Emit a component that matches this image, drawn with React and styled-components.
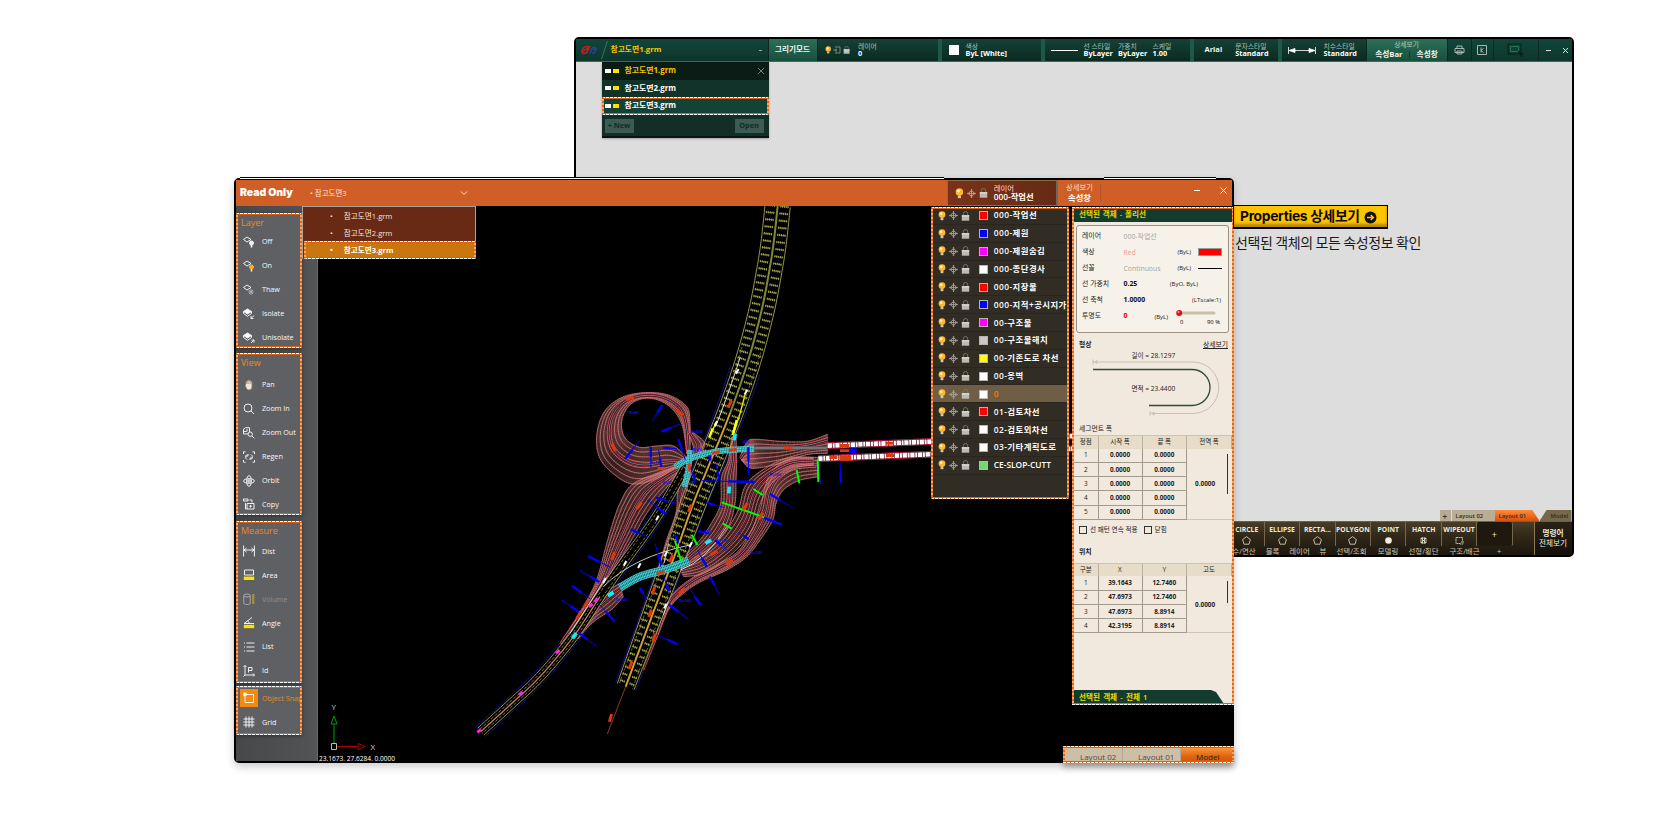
import React from 'react';
import styled, { createGlobalStyle, css } from 'styled-components';

const Global = createGlobalStyle`
  * { box-sizing: border-box; }
  body { margin: 0; background: #fff; }
  #root { width: 1671px; height: 840px; overflow: hidden; }
`;

const ui = '"Open Sans", "Noto Sans CJK KR", sans-serif';

const Desktop = styled.main`
  position: relative;
  width: 1671px;
  height: 840px;
  background: #fff;
  overflow: hidden;
  font-family: ${ui};
  font-size: 8px;
  line-height: 1;
  white-space: nowrap;
`;

const Window = styled.section`
  position: absolute;
  left: ${p => p.$x}px;
  top: ${p => p.$y}px;
  width: ${p => p.$w}px;
  height: ${p => p.$h}px;
  border: 2px solid #000;
  border-radius: 5px;
  background: ${p => p.$bg};
  display: flex;
  flex-direction: column;
  box-shadow: ${p => p.$shadow || 'none'};
`;

const marching = css`
  &::after {
    content: '';
    position: absolute;
    inset: 0;
    pointer-events: none;
    border-radius: 2px;
    background:
      repeating-linear-gradient(90deg, #fff 0 3px, #e8640f 3px 4px) 0 0 / 100% 1px no-repeat,
      repeating-linear-gradient(90deg, #fff 0 3px, #e8640f 3px 4px) 0 100% / 100% 1px no-repeat,
      linear-gradient(#d8600f, #d8600f) 0 1px / 100% 1px no-repeat,
      linear-gradient(#d8600f, #d8600f) 0 calc(100% - 1px) / 100% 1px no-repeat,
      repeating-linear-gradient(#e8640f 0 2px, #ffa468 2px 4px) 0 0 / 2px 100% no-repeat,
      repeating-linear-gradient(#e8640f 0 2px, #ffa468 2px 4px) 100% 0 / 2px 100% no-repeat;
  }
`;

/* ---------- green drawing window ---------- */

const GreenBar = styled.header`
  height: 23px;
  flex: none;
  display: flex;
  align-items: stretch;
  color: #eef5f1;
  background: linear-gradient(#11463a, #0e352b);
  border-bottom: 1px solid #2a7558;
  font-weight: 700;
`;
const BarCell = styled.div`
  width: ${p => p.$w}px;
  padding-left: ${p => p.$pad || 0}px;
  flex: none;
  display: flex;
  align-items: center;
  justify-content: ${p => (p.$center ? 'center' : 'flex-start')};
  gap: ${p => p.$gap || 0}px;
  font-size: ${p => p.$size || 7.5}px;
  color: ${p => p.$color || '#eef5f1'};
  background: ${p =>
    p.$light ? 'linear-gradient(#2c7059, #184f3e)' : p.$flat ? 'transparent' : 'linear-gradient(#143f34 10%, #0a2a21)'};
  border-right: ${p => (p.$last ? '0' : p.$edge ? '4px solid #1e5946' : '1px solid #0a2a22')};
`;
const FileName = styled.span` flex: 1; `;
const Dash = styled.i`
  width: 3px;
  height: 1px;
  margin-right: 6px;
  background: #7fb09c;
`;
const Slant = styled.i`
  width: 1px;
  height: 18px;
  margin-right: 6px;
  background: #2f7a60;
  transform: skewX(-18deg);
`;
const Pair = styled.div`
  display: flex;
  flex-direction: column;
  gap: 0;
  width: ${p => (p.$w ? p.$w + 'px' : 'auto')};
  font-size: 7.3px;
  line-height: 7.5px;
  color: #fff;
  small { font-size: 6.8px; font-weight: 400; color: #a9c0b7; }
`;
const Whitebox = styled.i`
  width: 10px;
  height: 10px;
  background: #fff;
`;
const Rule = styled.i`
  width: 27px;
  height: 1px;
  background: #fff;
`;
const DetailPair = styled.div`
  display: flex;
  flex-direction: column;
  align-items: center;
  gap: 2px;
  small { font-size: 6.7px; font-weight: 400; color: #a9d0c0; }
  div { display: flex; gap: 6.5px; font-size: 7.7px; }
  i { width: 1px; background: #0e3a2e; }
`;

const GreenMenu = styled.div`
  position: absolute;
  left: 26px;
  top: 23px;
  width: 167px;
  height: 76px;
  background: #132e27;
  border-bottom: 2px solid #071510;
  box-shadow: 0 1px 2px #0004;
`;
const GreenItem = styled.div`
  position: relative;
  height: 17.6px;
  display: flex;
  align-items: center;
  padding: 0 5px 0 3px;
  font-size: 7.9px;
  font-weight: 700;
  color: ${p => (p.$current ? '#f6c400' : '#fff')};
  background: ${p => (p.$current ? '#0b1b16' : p.$picked ? '#154236' : '#12332a')};
  ${p => p.$picked && marching}
  span { flex: 1; padding-top: .6px; }
`;
const Chips = styled.i`
  width: 14px;
  height: 4px;
  margin-right: 6px;
  background: linear-gradient(90deg, #fff 0 6.5px, transparent 6.5px 8px, #ffe100 8px);
`;
const MenuFooter = styled.div`
  display: flex;
  justify-content: space-between;
  padding: 4px 5px 0 3px;
`;
const GhostButton = styled.div`
  width: 29px;
  height: 14px;
  display: grid;
  place-items: center;
  font-size: 7.3px;
  font-weight: 700;
  color: #122c25;
  background: #3c5b52;
`;

const GreenSpacer = styled.div` flex: 1; `;
const LayoutTabs = styled.div`
  height: 11px;
  display: flex;
  justify-content: flex-end;
`;
const LayoutTab = styled.div`
  width: ${p => p.$w}px;
  display: flex;
  align-items: center;
  padding: 2px 0 0 ${p => p.$pad}px;
  font-size: ${p => p.$size || 5.9}px;
  font-weight: 600;
  color: #352d20;
  margin-right: ${p => p.$gap || 0}px;
  background: ${p => p.$bg};
  clip-path: ${p => p.$clip || 'none'};
`;
const CommandBar = styled.footer`
  height: 34px;
  flex: none;
  display: flex;
  justify-content: flex-end;
  color: #eee9dc;
  background: linear-gradient(#4a3d26, #32291a 40%, #1c160e);
  border-top: 1px solid #6f6244;
  border-radius: 0 0 3px 3px;
`;
const CommandGroup = styled.div`
  width: 304px;
  display: flex;
  flex-direction: column;
`;
const CommandRow = styled.div`
  display: flex;
  height: 25.5px;
  flex: none;
`;
const Command = styled.div`
  width: 35.4px;
  height: 24px;
  flex: none;
  display: flex;
  flex-direction: column;
  align-items: center;
  gap: 2.5px;
  padding-top: 4.6px;
  font-size: 6.8px;
  font-weight: 700;
  border-right: 1px solid #75684a;
`;
const AddCommand = styled.div`
  width: 35.4px;
  height: 24px;
  display: grid;
  place-items: center;
  font-size: 9px;
  background: #1e190f;
  border-right: 1px solid #75684a;
  border-radius: 2px;
`;
const Categories = styled.div`
  display: flex;
  align-items: center;
  height: 9px;
  flex: none;
  font-size: 7.4px;
  color: #cfc7b2;
`;
const Category = styled.div`
  width: ${p => p.$w}px;
  flex: none;
  text-align: center;
`;
const Prompt = styled.div`
  width: 38px;
  display: flex;
  flex-direction: column;
  align-items: center;
  justify-content: center;
  gap: 2.500px;
  padding-top: 1px;
  font-size: 7.6px;
  border-left: 1px solid #8a7a54;
  background: linear-gradient(#2a2216, #14100a);
`;

/* ---------- callout ---------- */

const Callout = styled.aside`
  position: absolute;
  left: 1233px;
  top: 205px;
  color: #0a0a0a;
  font-family: "Noto Sans CJK KR", sans-serif;
`;
const CalloutTag = styled.div`
  width: 155px;
  height: 24px;
  display: flex;
  align-items: center;
  gap: 4px;
  padding: 1px 0 0 6px;
  border: 1px solid #000;
  border-bottom-width: 2px;
  box-shadow: inset 0 -3px 3px #b38500;
  background: #ffc400;
  font-family: Inter, "Noto Sans CJK KR", sans-serif;
  font-size: 13.8px;
  font-weight: 700;
  letter-spacing: -.3px;
`;
const CalloutText = styled.p`
  margin: 6px 0 0 2px;
  font-size: 14px;
  letter-spacing: -.38px;
  color: #1a1a1a;
`;

/* ---------- read only window ---------- */

const OrangeBar = styled.header`
  height: 26px;
  flex: none;
  display: flex;
  align-items: center;
  color: #fff;
  background: #d05f27;
`;
const Brand = styled.b`
  width: 74px;
  padding-left: 4px;
  font-family: Inter, sans-serif;
  font-size: 10.4px;
  font-weight: 900;
`;
const Current = styled.span`
  width: 150px;
  padding-top: 1px;
  font-size: 7.5px;
  color: #ffe3d3;
`;
const Gap = styled.i` flex: ${p => (p.$w ? `0 0 ${p.$w}px` : 1)}; `;
const LayerBox = styled.div`
  width: 111px;
  height: 26px;
  display: flex;
  align-items: center;
  gap: 3px;
  padding-left: 7px;
  background: linear-gradient(90deg, #7a321a, #662a15);
  border: 1px solid #8d6c45;
  border-right: 2px solid #6b6a58;
`;
const TwoLine = styled.div`
  width: ${p => p.$w}px;
  display: flex;
  flex-direction: column;
  gap: ${p => p.$gap || 0}px;
  padding-left: ${p => p.$pad || 0}px;
  border-right: ${p => (p.$line ? '1px solid #b75424' : '0')};
  font-size: 8.3px;
  font-weight: 600;
  small { font-size: 7.3px; font-weight: 400; color: #ffdccb; }
  span { padding-left: ${p => p.$indent || 0}px; }
`;
const TopLine = styled.i`
  position: absolute;
  top: -3px;
  left: ${p => p.$x}px;
  width: ${p => p.$w}px;
  height: 2px;
  background: linear-gradient(#000 50%, #fff 50%);
`;

const Body = styled.div`
  position: relative;
  flex: 1;
  display: flex;
  min-height: 0;
  background: #000;
`;
const Sidebar = styled.nav`
  width: 82px;
  flex: none;
  display: flex;
  flex-direction: column;
  padding-top: 7px;
  background: linear-gradient(90deg, #47484a, #535456);
  border-right: 1px solid #6a6b6e;
`;
const Group = styled.div`
  position: relative;
  width: 66px;
  height: ${p => p.$h}px;
  margin-bottom: ${p => p.$gap}px;
  padding-top: ${p => p.$top || 0}px;
  flex: none;
  background: #5f6063;
  box-shadow: 0 1px 4px #0006;
  ${marching}
`;
const GroupTitle = styled.div`
  height: ${p => p.$h}px;
  padding: 5px 0 0 5px;
  font-size: 9px;
  color: #f08c10;
`;
const Tool = styled.div`
  height: 23.9px;
  display: flex;
  align-items: center;
  gap: 4px;
  padding-left: 4px;
  font-size: 7.2px;
  font-weight: 500;
  overflow: hidden;
  color: ${p => (p.$tone === 'off' ? '#8f9092' : p.$tone === 'on' ? '#e08a30' : '#f8f8f8')};
`;
const IconBox = styled.i`
  width: 18px;
  height: 18px;
  flex: none;
  display: grid;
  place-items: center;
  background: ${p => (p.$on ? '#f5890b' : 'transparent')};
`;

const BrownMenu = styled.div`
  position: absolute;
  left: 66px;
  top: 0;
  width: 174px;
  background: #682a15;
  border: 1px solid #a9a39d;
  border-bottom: 0;
`;
const BrownItem = styled.div`
  position: relative;
  height: 17.2px;
  padding: 2px 0 0 27px;
  display: flex;
  align-items: center;
  gap: 11px;
  font-size: 7.6px;
  color: #f4e4dc;
  ${p => p.$picked && css`
    width: 172px;
    height: 18px;
    margin-left: 1px;
    padding: 0 0 0 26px;
    font-weight: 700;
    color: #fff;
    background: #c8760d;
    ${marching}
  `}
`;

const Canvas = styled.div`
  flex: 1;
  min-width: 0;
  overflow: hidden;
  svg { display: block; }
`;

const LayerPanel = styled.div`
  position: absolute;
  left: 695px;
  top: 1px;
  width: 138px;
  height: 292px;
  overflow: hidden;
  background: #312c24;
  ${marching}
`;
const LayerRow = styled.div`
  height: 17.85px;
  display: flex;
  align-items: center;
  padding: .5px 0 0 7px;
  gap: 3.2px;
  font-size: 8.4px;
  font-weight: 600;
  color: ${p => (p.$active ? '#ff7800' : '#fff')};
  background: ${p => (p.$active ? '#6f5e45' : 'transparent')};
  border-bottom: 1px solid #2a261f;
`;
const LayerName = styled.span`
  letter-spacing: ${p => (p.$wide ? '.45px' : '0')};
`;
const Swatch = styled.i`
  width: 9px;
  height: 9px;
  margin: 0 3px 0 5px;
  border: 1px solid #b9b5ac;
  background: ${p => p.$c};
`;

const Props = styled.aside`
  position: absolute;
  left: 836px;
  top: 1px;
  width: 162px;
  height: 498px;
  padding: 1px 2px;
  display: flex;
  flex-direction: column;
  background: #f1e9dd;
  color: #222;
  font-size: 6.9px;
  ${marching}
`;
const PropsHead = styled.div`
  height: 14px;
  flex: none;
  padding: 3px 0 0 5px;
  background: #143c2e;
  color: #e6d400;
  font-weight: 600;
  font-size: 7.6px;
  word-spacing: .9px;
`;
const Card = styled.div`
  height: 108px;
  flex: none;
  margin: 3px 3px 0 2px;
  padding: 2px 6px 0 5px;
  border: 1px solid #9a9080;
  border-radius: 3px;
  background: #f6f2ea;
`;
const Field = styled.div`
  height: 16.1px;
  display: grid;
  grid-template-columns: 41.5px 1fr auto;
  align-items: center;
  b {
    color: ${p => p.$c || '#111'};
    font-weight: ${p => (p.$dim ? 400 : 700)};
    padding-top: ${p => (p.$dim ? 2 : 0)}px;
  }
`;
const Note = styled.span`
  display: flex;
  align-items: center;
  gap: ${p => p.$gap || 7}px;
  font-size: 6px;
  padding-right: ${p => p.$r || 0}px;
`;
const ColorBar = styled.i`
  width: 24px;
  height: 8px;
  border: 1px solid #9a9a9a;
  background: red;
`;
const LineBar = styled.i`
  width: 24px;
  height: 1px;
  background: #000;
`;
const SectionHead = styled.div`
  height: ${p => p.$h}px;
  flex: none;
  display: flex;
  justify-content: space-between;
  align-items: center;
  padding: ${p => p.$top || 0}px 4px 0 5px;
  font-size: 6.8px;
  font-weight: ${p => (p.$bold ? 700 : 400)};
  u { font-weight: 400; text-underline-offset: 1px; }
`;
const Figure = styled.div`
  height: 74px;
  flex: none;
  svg { display: block; }
`;
const Table = styled.div`
  display: grid;
  grid-template-columns: 24.5px 44px 44.5px 1fr;
  grid-template-rows: 12.5px repeat(${p => p.$rows}, 14.25px);
  flex: none;
  border-top: 1px solid #cdc4b4;
  text-align: center;
`;
const Th = styled.div`
  display: grid;
  place-items: center;
  background: #e6dcc8;
  border-right: 1px solid #b9b0a1;
  font-size: 6.5px;
`;
const Td = styled.div`
  grid-column: ${p => p.$col};
  display: grid;
  place-items: center;
  padding-top: 1px;
  border-right: 1px solid #9f9789;
  border-bottom: 1px solid #a39b8d;
  font-weight: ${p => (p.$bold ? 700 : 400)};
  font-size: 6.4px;
`;
const TdSpan = styled.div`
  grid-column: 4;
  grid-row: 2 / span ${p => p.$rows};
  position: relative;
  display: flex;
  align-items: center;
  padding: 1px 0 0 8px;
  font-weight: 700;
  font-size: 6.4px;
  border-bottom: 1px solid #cfc6b7;
  i {
    position: absolute;
    right: 4px;
    top: 5px;
    width: 1px;
    height: ${p => p.$bar}px;
    background: #333;
  }
`;
const Checks = styled.div`
  height: 21px;
  flex: none;
  display: flex;
  align-items: center;
  padding-left: 5px;
  gap: 3px;
  font-size: 6.6px;
  span { margin-right: 3px; }
`;
const Check = styled.i`
  width: 8px;
  height: 8px;
  border: 1px solid #333;
`;
const PropsFoot = styled.div`
  height: 14px;
  flex: none;
  margin-top: auto;
  width: 150px;
  padding: 4px 0 0 5px;
  background: #143c2e;
  color: #f0de00;
  font-weight: 600;
  font-size: 7.6px;
  word-spacing: 1.2px;
  clip-path: polygon(0 0, 137px 0, 142px 2px, 150px 14px, 0 14px);
`;
const BottomTabs = styled.div`
  position: absolute;
  right: -2px;
  bottom: -2px;
  width: 171px;
  height: 17px;
  display: flex;
  background: #ccbfa6;
  box-shadow: 0 4px 6px #0005;
  ${marching}
`;
const BottomTab = styled.div`
  width: ${p => p.$w}px;
  padding-left: ${p => p.$pad}px;
  padding-top: 7px;
  font-size: 8px;
  color: ${p => (p.$on ? '#222' : '#544c40')};
  background: ${p => (p.$on ? 'linear-gradient(#ffa04a, #e0640e 60%, #d05508)' : 'transparent')};
  border-right: 1px solid #b3a78f;
`;

/* ---------- icons ---------- */

const Bulb = ({ s = 10 }) => (
  <svg width={s * 0.8} height={s} viewBox="0 0 8 10">
    <circle cx="4" cy="3.6" r="3.4" fill="#ffb72b" />
    <circle cx="3.2" cy="2.8" r="1.3" fill="#fff2c0" />
    <path d="M2.6 6.8h2.8v2.4h-2.8z" fill="#cfcac0" />
  </svg>
);
const Freeze = ({ s = 9, c = '#aaa69e' }) => (
  <svg width={s} height={s} viewBox="0 0 9 9" fill="none" stroke={c} strokeWidth=".8">
    <path d="M4.5 .3v8.4M.3 4.5h8.4M3.5 1.3l1-1 1 1M3.5 7.7l1 1 1-1M1.3 3.5l-1 1 1 1M7.7 3.5l1 1-1 1" />
    <circle cx="4.5" cy="4.5" r="2.3" strokeWidth=".8" />
  </svg>
);
const Lock = ({ s = 9 }) => (
  <svg width={s * 0.9} height={s} viewBox="0 0 9 10">
    <path d="M2.3 4.5V2.7a2.2 2.2 0 0 1 4.4 0V4.5" fill="none" stroke="#77736b" />
    <path d="M.8 4.2h7.4v5.5H.8z" fill="#bdbab4" />
    <path d="M.8 4.2h7.4v1.4H.8z" fill="#dedbd5" />
  </svg>
);

const layerBase = <path d="M0.5 3.5 4 1l4 2.5L4 6z" />;
const toolIcons = {
  off: <>{layerBase}<circle cx="8.5" cy="7" r="2" fill="#eee" /><path d="M8.5 9v2.5" strokeWidth="1.6" /></>,
  on: <>{layerBase}<circle cx="8.5" cy="7" r="2" fill="#ffae2a" stroke="#ffae2a" /><path d="M8.5 9v2.5" strokeWidth="1.6" /></>,
  thaw: <>{layerBase}<path d="M8 5v6M5.3 8h5.4M6 6l4 4M10 6l-4 4" stroke="#aab4c0" /></>,
  isolate: <><path d="M.5 3.5 4.5 1l4 2.5-4 2.5z" fill="#fff" /><path d="M.5 3.5v2l4 2.8 4-2.8v-2M11 7.5l-3 3M8 8v2.5h2.5" /></>,
  unisolate: <><path d="M.5 3.5 4.5 1l4 2.5-4 2.5z" fill="#fff" /><path d="M.5 3.5v2l4 2.8 4-2.8v-2M8 11l3-3M8.5 8H11v2.5" /></>,
  pan: <><path d="M3 5V2.5h1V1.5h1.2V1h1.3v.6H8v1h1V8c0 2-1.4 3-3 3S3.5 10 3 8.5L2 6z" fill="#f2e6da" stroke="#8a7d74" /><path d="M4.3 2v3M5.8 1.500v3.500M7.300 2v3" stroke="#8a7d74" strokeWidth=".6" /></>,
  zoomin: <><circle cx="5" cy="5" r="4" /><path d="M8 8l3 3" /></>,
  zoomout: <><path d="M.5 2.2l2-1.500h4v5l-1.500 1.200h-4.500z M4 2v2.5M.5 4.5h3" /><circle cx="7.2" cy="7.2" r="2.2" fill="#5f6063" /><path d="M9 9l2.400 2.400" /></>,
  regen: <><path d="M.5 3V.8h2M9.5 .8h2V3M.5 9v2.2h2M9.5 11.2h2V9" /><path d="M4 8.5a3 3 0 0 1 0-5M8 3.5a3 3 0 0 1 0 5M5 3v2H3M7 9V7h2" /></>,
  orbit: <><ellipse cx="6" cy="6" rx="5.3" ry="2.2" /><ellipse cx="6" cy="6" rx="2.2" ry="5.3" /><path d="M6 3v6M3 6h6" /></>,
  copy: <><path d="M.5 1h4.500v2H.5zM6.500 2H9v2.500M4 5.500h7v5.500H4zM7.500 7v2.500M6.200 8.200h2.600M2.500 5v6H4" /></>,
  dist: <path d="M.6 .5v11M11.400 .5v11M1 5h10M3.5 3 1 5l2.5 2M8.5 3 11 5 8.5 7" />,
  area: <><path d="M1.5 1h9v5h-9z" /><path d="M.8 7.6h10.400v3.400H.8z" fill="#ffe100" stroke="none" /></>,
  volume: <g opacity=".5"><ellipse cx="4" cy="2.5" rx="3.2" ry="1.5" /><path d="M.8 2.5v8c2 1.5 4.5 1.5 6.400 0v-8" /><path d="M9 1h2.5v10H9z" fill="#d8b820" stroke="none" /></g>,
  angle: <><path d="M9 .5 1 6.5h10M4.5 4q2 1 1.8 2.5" /><path d="M.8 7.8h10.400v3.400H.8z" fill="#ffe100" stroke="none" /></>,
  list: <path d="M3.5 2h8M3.5 6h8M3.5 10h8M1 2h1M1 6h1M1 10h1" />,
  id: <><path d="M2 .5v9.5h9.500M.5 2 2 .5 3.5 2M10 8.5l1.500 1.500-1.500 1.500M.5 11.5 2 10M5.5 7.5v-5h3.500v3H5.500" /></>,
  snap: <><path d="M2 2.5h8.500v8H2z" /><path d="M.7 1h2.600v2.600H.7z" fill="#fff" /></>,
  grid: <path d="M3 .5v11M6 .5v11M9 .5v11M.5 3h11M.5 6h11M.5 9h11" />,
};
const ToolIcon = ({ name }) => (
  <svg width="12" height="12" viewBox="0 0 12 12" fill="none" stroke="#f6f6f6" strokeWidth=".95">
    {toolIcons[name]}
  </svg>
);

const Pentagon = () => (
  <svg width="9" height="9" viewBox="0 0 9 9" fill="none" stroke="#e6dfc8" strokeWidth=".8">
    <path d="M4.5 .6 8.4 3.6 7 8.2H2L.6 3.6z" />
  </svg>
);

/* ---------- interchange drawing ---------- */

const sample = (pts, n = 10) => {
  const out = [];
  for (let i = 0; i < pts.length - 1; i++) {
    const a = pts[i - 1] || pts[i], b = pts[i], c = pts[i + 1], d = pts[i + 2] || c;
    for (let k = 0; k < n; k++) {
      const t = k / n;
      out.push([0, 1].map(j =>
        0.5 * (2 * b[j] + (c[j] - a[j]) * t + (2 * a[j] - 5 * b[j] + 4 * c[j] - d[j]) * t * t + (3 * b[j] - a[j] - 3 * c[j] + d[j]) * t * t * t)));
    }
  }
  out.push(pts[pts.length - 1]);
  return out;
};
const toPath = pts => 'M' + pts.map(p => p[0].toFixed(1) + ' ' + p[1].toFixed(1)).join('L');
const shift = (pts, d) => pts.map((p, i) => {
  const a = pts[Math.max(0, i - 1)], b = pts[Math.min(pts.length - 1, i + 1)];
  const dx = b[0] - a[0], dy = b[1] - a[1], l = Math.hypot(dx, dy) || 1;
  const off = typeof d === 'function' ? d(i / (pts.length - 1)) : d;
  return [p[0] - (dy / l) * off, p[1] + (dx / l) * off];
});
const everyStep = (pts, step) => {
  const out = [];
  let left = 0;
  for (let i = 1; i < pts.length; i++) {
    const [ax, ay] = pts[i - 1], [bx, by] = pts[i];
    const l = Math.hypot(bx - ax, by - ay);
    while (left < l) {
      const t = left / l;
      out.push({ x: ax + (bx - ax) * t, y: ay + (by - ay) * t, nx: -(by - ay) / l, ny: (bx - ax) / l, at: (i - 1 + t) / (pts.length - 1) });
      left += step;
    }
    left -= l;
  }
  return out;
};

const Band = ({ a, b, n = 7, core = 0.5 }) => {
  const A = sample(a), B = sample(b);
  const mix = t => A.map((p, i) => [p[0] + (B[i][0] - p[0]) * t, p[1] + (B[i][1] - p[1]) * t]);
  const lines = [];
  for (let i = 0; i <= n; i++) lines.push(toPath(mix(i / n)));
  const rungs = [];
  A.forEach((p, i) => {
    const q = B[i];
    rungs.push(`M${p[0]} ${p[1]}L${q[0]} ${q[1]}`);
    if (A[i + 1]) rungs.push(`M${(p[0] + A[i + 1][0]) / 2} ${(p[1] + A[i + 1][1]) / 2}L${(q[0] + B[i + 1][0]) / 2} ${(q[1] + B[i + 1][1]) / 2}`);
  });
  const mid = toPath(mix(core));
  return (
    <g fill="none">
      <path d={rungs.join('')} stroke="#c06c6c" strokeWidth="1.7" opacity=".75" />
      {lines.map((d, i) => (
        <React.Fragment key={i}>
          <path d={d} stroke="#e88888" strokeWidth="2" />
          <path d={d} stroke="#d87878" strokeWidth="5" strokeDasharray="2 5" opacity=".4" />
        </React.Fragment>
      ))}
      <path d={mid} stroke="#d01840" strokeWidth="10" />
      <path d={mid} stroke="#181414" strokeWidth="6.5" />
      <path d={mid} stroke="#b4b4b4" strokeWidth="2" />
    </g>
  );
};

const mainRoad = sample([[953, -492], [942, -390], [930, -310], [905, -180], [865, -30], [810, 130], [745, 290], [700, 400], [650, 540], [575, 740], [497, 950]]);
const diagRoad = sample([[675, 295], [590, 440], [490, 580], [420, 680], [340, 800], [240, 920], [150, 1005], [62, 1085]]);
const half = t => (t < 0.7 ? 38 : 38 - (t - 0.7) * 38);

const MainRoad = () => {
  const steps = everyStep(mainRoad, 21.5);
  const rung = side => steps.map(s => {
    const e = (half(s.at) - 4) * side, c = 8 * side;
    return `M${(s.x + s.nx * c).toFixed(1)} ${(s.y + s.ny * c).toFixed(1)}L${(s.x + s.nx * e).toFixed(1)} ${(s.y + s.ny * e).toFixed(1)}`;
  }).join('');
  return (
    <g fill="none" stroke="#b0b052">
      <path d={toPath(shift(mainRoad, half))} strokeWidth="2.6" />
      <path d={toPath(shift(mainRoad, t => -half(t)))} strokeWidth="2.6" />
      <path d={rung(1) + rung(-1)} strokeWidth="7" strokeDasharray="2.5 3" />
      <path d={rung(1) + rung(-1)} strokeWidth="2" />
      <path d={toPath(shift(mainRoad.slice(38), t => 29 - 8 * t))} strokeWidth="1.8" strokeDasharray="8 5" />
      <path d={toPath(shift(mainRoad.slice(38), t => -29 + 8 * t))} strokeWidth="1.8" strokeDasharray="8 5" />
      <path d={toPath(mainRoad)} stroke="#85853c" strokeWidth="6" />
    </g>
  );
};

const bands = [
  { a: [[690, 250], [690, 160], [680, 110], [625, 75], [550, 68], [480, 85], [430, 130], [410, 200], [420, 265], [465, 315], [520, 342], [590, 325], [660, 285]],
    b: [[680, 250], [668, 170], [640, 120], [600, 92], [555, 85], [515, 100], [490, 135], [485, 175], [500, 210], [540, 232], [590, 228], [640, 228], [680, 262]], n: 7, core: 0.5 },
  { a: [[660, 285], [590, 310], [515, 345], [480, 400], [455, 470], [435, 540], [410, 630], [370, 710], [300, 820]],
    b: [[680, 295], [645, 325], [605, 370], [560, 430], [520, 500], [480, 570], [440, 640], [390, 715], [306, 824]], n: 8, core: 0.55 },
  { a: [[840, 262], [862, 215], [890, 208], [960, 214], [1040, 214], [1103, 193]],
    b: [[846, 272], [868, 293], [900, 293], [960, 280], [1040, 254], [1103, 250]], n: 6, core: 0.3 },
  { a: [[1075, 262], [990, 266], [940, 300], [915, 350], [900, 420], [870, 490], [830, 548], [760, 590], [700, 622], [650, 660], [615, 705], [585, 790], [546, 895]],
    b: [[1075, 320], [1015, 332], [970, 360], [948, 400], [938, 450], [900, 510], [860, 560], [800, 600], [720, 636], [668, 672], [628, 715], [594, 795], [552, 898]], n: 6, core: 0.4 },
  { a: [[1060, 262], [980, 265], [900, 305], [855, 350], [835, 420], [800, 480], [760, 525], [710, 560], [655, 585]],
    b: [[1060, 285], [1000, 296], [940, 335], [905, 390], [880, 470], [840, 528], [780, 580], [725, 612], [670, 620]], n: 6, core: 0.5 },
  { a: [[815, 200], [805, 270], [785, 320], [782, 400], [760, 450], [720, 510], [670, 560]],
    b: [[828, 200], [830, 270], [828, 330], [825, 400], [805, 470], [760, 525], [690, 580]], n: 5, core: 0.6 },
  { a: [[684, 300], [655, 360], [648, 430], [620, 510], [595, 600], [570, 680], [540, 750]],
    b: [[694, 300], [680, 360], [660, 430], [635, 510], [612, 600], [584, 680], [548, 752]], n: 2, core: 0.5 },
  { a: [[480, 640], [430, 670], [395, 710], [365, 755], [340, 800]],
    b: [[490, 680], [455, 718], [410, 748], [380, 775], [355, 806]], n: 5, core: 0.4 },
  { a: [[686, 190], [700, 230], [700, 262]], b: [[700, 188], [735, 222], [710, 262]], n: 3, core: 0.3 },
];

const blue = [
  [577, 152, 607, 105], [604, 185, 660, 162], [538, 212, 496, 266], [655, 208, 676, 270], [690, 290, 706, 334], [748, 255, 756, 284], [768, 280, 777, 326], [865, 232, 866, 316],
  [725, 332, 885, 336], [588, 383, 648, 400], [562, 390, 618, 432], [512, 478, 566, 502], [585, 520, 604, 585], [384, 558, 450, 592], [360, 602, 418, 636], [336, 647, 392, 688],
  [305, 690, 360, 728], [355, 788, 410, 828], [415, 700, 464, 754], [540, 653, 560, 690], [610, 615, 626, 664], [645, 495, 662, 530], [712, 540, 740, 590], [750, 620, 778, 674],
  [688, 655, 722, 706], [626, 704, 686, 748], [592, 796, 652, 822], [740, 398, 790, 412], [860, 425, 966, 464], [930, 372, 992, 410], [836, 488, 866, 508], [1072, 290, 1083, 342],
  [1140, 276, 1143, 338], [572, 230, 573, 294], [596, 240, 604, 292], [610, 234, 650, 236], [720, 486, 748, 490], [765, 510, 800, 540],
];
const green = [[645, 512, 664, 575], [695, 494, 712, 525], [785, 397, 912, 442], [880, 357, 908, 375], [788, 460, 815, 476], [1010, 300, 1018, 340], [1073, 268, 1075, 336]];
const marks = [
  [810, 102, -65], [690, 415, -70], [688, 292, -85], [768, 248, -15], [818, 240, -8], [985, 234, 0], [460, 558, -70], [538, 407, -55], [378, 702, -60], [357, 735, -60], [602, 609, -15],
  [581, 662, -72], [571, 730, -72], [512, 886, -68], [452, 1044, -75], [583, 803, -72], [666, 664, -40], [762, 549, -30], [808, 577, -30], [856, 410, -60], [903, 438, -60], [605, 296, 0],
  [460, 232, 60], [510, 86, -20], [659, 128, 45], [634, 566, -60], [1120, 263, 0], [1290, 220, 0], [1290, 257, 0],
];
const labels = [[507, 132, 'R=80'], [693, 190, 'R=130'], [848, 220, '450'], [870, 551, 'R=130'], [466, 694, 'R=200'], [658, 697, 'R=140'], [608, 342, 'R=90'], [686, 343, '120'], [570, 282, 'R=110'], [928, 317, 'R=100'], [716, 490, 'R=150'], [768, 516, 'R=150'], [697, 243, 'R=70']];

const bridges = [
  [[[645, 290], [700, 262], [780, 243], [882, 236]], 16],
  [[[690, 240], [686, 290], [673, 350]], 14],
  [[[480, 653], [540, 620], [620, 597], [686, 572]], 22],
];
const viaducts = ['M1103 227L1840 198', 'M1075 266L1840 236'];

const Drawing = () => (
  <svg width="916" height="555" viewBox="318 206 916 555">
    <g transform="translate(460 370) scale(.33333)">
      <g fill="none" stroke="#1414a8" strokeWidth="2.5">
        <path d={toPath(shift(mainRoad.slice(42), t => 46 - 14 * t))} />
        <path d={toPath(shift(mainRoad.slice(42), t => -46 + 14 * t))} />
        <path d={toPath(shift(diagRoad, 20))} />
        <path d={toPath(shift(diagRoad, -20))} />
      </g>
      {bands.map((b, i) => <Band key={i} {...b} />)}
      <path d={toPath(mainRoad.slice(40))} fill="none" stroke="#000" strokeWidth="60" />
      <MainRoad />
      <path d={toPath(mainRoad.slice(50))} fill="none" stroke="#e0a028" strokeWidth="4" />
      <path d={toPath(shift(mainRoad.slice(40, 54), 26))} fill="none" stroke="#fff" strokeWidth="2.5" />
      <path d="M856 70Q842 130 820 195M770 155L748 200" fill="none" stroke="#e8e800" strokeWidth="4" />
      <path d="M830 150L818 195M758 175L748 202" fill="none" stroke="#ffff20" strokeWidth="7" />
      <path d={toPath(diagRoad)} fill="none" stroke="#000" strokeWidth="26" />
      <g fill="none" stroke="#b0b052">
        {[-14, 14].map(d => <path key={d} d={toPath(shift(diagRoad, d))} strokeWidth="2.5" />)}
        {[-7, 7].map(d => <path key={d} d={toPath(shift(diagRoad, d))} strokeWidth="2" strokeDasharray="10 5" />)}
      </g>
      <path d={toPath(diagRoad.slice(30))} fill="none" stroke="#d88870" strokeWidth="3.5" />
      <path d="M497 950L442 1092" stroke="#8c3a22" strokeWidth="3" />
      <path d="M430 650Q520 560 690 525M330 790L440 620M612 580L626 520M610 735L624 695M662 600Q740 570 800 470" fill="none" stroke="#e8e8e8" strokeWidth="2.5" />
      {viaducts.map(d => (
        <g key={d} fill="none">
          <path d={d} stroke="#d01850" strokeWidth="20" />
          <path d={d} stroke="#3a0010" strokeWidth="16" />
          <path d={d} stroke="#fff" strokeWidth="14" strokeDasharray="13 2 6 2" />
        </g>
      ))}
      <path d="M880 234H1100" stroke="#555" strokeWidth="10" />
      <path d="M880 234H1100" stroke="#bbb" strokeWidth="2" />
      {bridges.map(([p, w], i) => {
        const s = sample(p);
        return (
          <g key={i} fill="none">
            <path d={toPath(s)} stroke="#0a6a70" strokeWidth={w} />
            <path d={toPath(s)} stroke="#48d8de" strokeWidth={w} strokeDasharray="2 3" />
            {[-w / 2, -w / 5, w / 5, w / 2].map(d => <path key={d} d={toPath(shift(s, d))} stroke="#70f0f4" strokeWidth="1.8" />)}
          </g>
        );
      })}
      {blue.map(([a, b, c, d], i) => (
        <g key={i} stroke="#0000ff">
          <path d={`M${a} ${b}L${c} ${d}`} strokeWidth="3" />
          <path d={`M${(a + c) / 2} ${(b + d) / 2}L${i % 2 ? a : c} ${i % 2 ? b : d}`} strokeWidth="7" />
        </g>
      ))}
      {green.map(([a, b, c, d], i) => <path key={i} d={`M${a} ${b}L${c} ${d}`} stroke="#00ff00" strokeWidth="6" />)}
      {marks.map(([x, y, r], i) => <rect key={i} x="-12" y="-5" width="24" height="9" fill="#dc3a0c" transform={`translate(${x} ${y}) rotate(${r})`} />)}
      <path d="M1140 222h28v10h-28zM1140 238h28v8h-28zM1138 256h36v16h-36z" fill="#dc3a0c" />
      <path d="M1168 235h22v15h-22z" fill="#0000ff" />
      {[[824, 201, -80], [807, 360, -85], [745, 515, -30], [452, 672, -30], [343, 797, -55]].map(([x, y, r]) => (
        <rect key={x} x="-10" y="-5.5" width="20" height="11" fill="#00f4ff" transform={`translate(${x} ${y}) rotate(${r})`} />
      ))}
      {[[293, 845], [182, 970], [57, 1082], [392, 706], [408, 690]].map(([x, y]) => (
        <rect key={x} x="-7" y="-4" width="14" height="9" fill="#ff20f0" transform={`translate(${x} ${y}) rotate(-40)`} />
      ))}
      {[[832, 4], [858, 66], [768, 160], [592, 444], [495, 580], [538, 587], [433, 632], [692, 524], [617, 552], [616, 708]].map(([x, y]) => (
        <rect key={x} x="-8" y="-3" width="16" height="6" fill="#fff" transform={`translate(${x} ${y}) rotate(-62)`} />
      ))}
      <g fill="#1010ff" fontFamily="Liberation Sans" fontSize="12" fontWeight="700">
        {labels.map(([x, y, t]) => <text key={x} x={x} y={y}>{t}</text>)}
      </g>
    </g>
    <g fill="none" strokeWidth="1">
      <path d="M334 743.5V724M331 724h6l-3-8z" stroke="#00a000" />
      <path d="M337 746.5h21M358 743.5v6l7-3z" stroke="#b00000" />
      <path d="M331.5 743.5h5v6h-5z" stroke="#bbb" />
    </g>
    <g fill="#ccc" fontFamily="Open Sans, sans-serif" fontSize="8">
      <text x="331.5" y="710">Y</text>
      <text x="370.5" y="749.5">X</text>
      <text x="319" y="760.5" fill="#fff" fontSize="6.6">23.1673, 27.6284, 0.0000</text>
    </g>
  </svg>
);

/* ---------- data ---------- */

const groups = [
  { title: 'Layer', h: 135, gap: 5, th: 17, tools: [['off', 'Off'], ['on', 'On'], ['thaw', 'Thaw'], ['isolate', 'Isolate'], ['unisolate', 'Unisolate']] },
  { title: 'View', h: 162, gap: 5.5, th: 20, tools: [['pan', 'Pan'], ['zoomin', 'Zoom In'], ['zoomout', 'Zoom Out'], ['regen', 'Regen'], ['orbit', 'Orbit'], ['copy', 'Copy']] },
  { title: 'Measure', h: 162, gap: 3, th: 19, tools: [['dist', 'Dist'], ['area', 'Area'], ['volume', 'Volume', 'off'], ['angle', 'Angle'], ['list', 'List'], ['id', 'Id']] },
  { h: 49, gap: 0, top: 1, tools: [['snap', 'Object Snap', 'on'], ['grid', 'Grid']] },
];
const layers = [
  ['000-작업선', 'red'], ['000-제원', '#00f'], ['000-제원숨김', '#f0f'], ['000-종단경사', '#fff'], ['000-지장물', 'red'],
  ['000-지적+공시지가', '#00f'], ['00-구조물', '#f0f'], ['00-구조물해치', '#c8c8c8'], ['00-기존도로 차선', '#ff0'], ['00-옹벽', '#fff'],
  ['0', '#fff'], ['01-검토차선', 'red'], ['02-검토외차선', '#fff'], ['03-기타계획도로', '#fff'], ['CE-SLOP-CUTT', '#73d773'],
];
const positions = [['39.1643', '12.7460'], ['47.6973', '12.7460'], ['47.6973', '8.8914'], ['42.3195', '8.8914']];

const DataTable = ({ heads, rows, total, bar }) => (
  <Table $rows={rows.length}>
    {heads.map(h => <Th key={h}>{h}</Th>)}
    {rows.map((r, i) => (
      <React.Fragment key={i}>
        <Td $col={1}>{i + 1}</Td>
        <Td $col={2} $bold>{r[0]}</Td>
        <Td $col={3} $bold>{r[1]}</Td>
      </React.Fragment>
    ))}
    <TdSpan $rows={rows.length} $bar={bar}>{total}<i /></TdSpan>
  </Table>
);

const GreenWindow = () => (
  <Window $x={573.5} $y={37} $w={1000} $h={520} $bg="#ddd">
    <GreenBar>
      <BarCell $w={26} $pad={4} $flat $last>
        <svg width="18" height="10" viewBox="0 0 18 10" fill="none" strokeWidth="1.5">
          <path d="M2.500 6.500l6-3.500c.5-1.800-2-2-4-.8S1 6.500 2.500 8s3.500 0 5-1.500M10 1L6.500 8.500" stroke="#b82424" />
          <path d="M10 8.500l1.500-4.500c1-2 4-2 4.500-.5S14.500 8.500 12 8.500M13 5l3-1.500" stroke="#24449a" />
        </svg>
      </BarCell>
      <BarCell $w={167} $pad={2} $size={7.8} $color="#f6c400" $flat>
        <Slant />
        <FileName>참고도면1.grm</FileName>
        <Dash />
      </BarCell>
      <BarCell $w={49} $center $light $size={7.6}>그리기모드</BarCell>
      <BarCell $w={124} $pad={7} $gap={2} $edge>
        <Bulb s={8} />
        <svg width="8" height="8" viewBox="0 0 8 8" fill="none" stroke="#78857f"><path d="M2 1h5v6H2M0 4h4M3 2.5V6" /></svg>
        <Lock s={8} />
        <Gap $w={4} />
        <Pair><small>레이어</small>0</Pair>
      </BarCell>
      <BarCell $w={103} $pad={7} $gap={7} $edge><Whitebox /><Pair><small>색상</small>ByL [White]</Pair></BarCell>
      <BarCell $w={149} $pad={6} $gap={6} $edge>
        <Rule />
        <Pair $w={28.5}><small>선 스타일</small>ByLayer</Pair>
        <Pair $w={28.5}><small>가중치</small>ByLayer</Pair>
        <Pair><small>스케일</small>1.00</Pair>
      </BarCell>
      <BarCell $w={88} $pad={11} $gap={13} $edge>Arial<Pair><small>문자스타일</small>Standard</Pair></BarCell>
      <BarCell $w={85} $pad={6} $gap={8}>
        <svg width="28" height="7" viewBox="0 0 28 7" stroke="#fff" fill="#fff" strokeWidth=".8"><path d="M.5 0v7M27.5 0v7M2 3.5h24M1 3.5l6-2v4zM27 3.5l-6-2v4z" /></svg>
        <Pair><small>치수스타일</small>Standard</Pair>
      </BarCell>
      <BarCell $w={81} $center $light>
        <DetailPair><small>상세보기</small><div>속성Bar<i />속성창</div></DetailPair>
      </BarCell>
      <BarCell $w={24} $center $flat>
        <svg width="11" height="10" viewBox="0 0 11 10" fill="none" stroke="#a5b9b1"><path d="M3 3V1h5v2M1 3.5h9v4H1zM3 6h5v3H3z" /></svg>
      </BarCell>
      <BarCell $w={22} $center $flat>
        <svg width="10" height="10" viewBox="0 0 10 10" fill="none" stroke="#a5b9b1"><path d="M.5 .5h9v9h-9zM4 2.5v5M6.5 3.5 4 5.5l2.5 2" /></svg>
      </BarCell>
      <BarCell $w={45} $center $flat>
        <svg width="18" height="16" viewBox="0 0 18 16" fill="none" stroke="#06201a"><path d="M1 2h13v10H1z" /><path d="M3.5 4.5h8v5h-8z" stroke="#247550" /><path d="M11 9l5 3-2 .5 1 2.5z" fill="#06201a" /></svg>
      </BarCell>
      <BarCell $w={33} $pad={7} $flat $last>
        <svg width="25" height="7" viewBox="0 0 25 7" fill="none" stroke="#dde8e3"><path d="M0 3.5h5M17 1l5 5M22 1l-5 5" /></svg>
      </BarCell>
    </GreenBar>
    <GreenMenu>
      <GreenItem $current><Chips /><span>참고도면1.grm</span>
        <svg width="6" height="6" viewBox="0 0 6 6" stroke="#8a9a94" strokeWidth=".8"><path d="M0 0l6 6M6 0L0 6" /></svg>
      </GreenItem>
      <GreenItem><Chips /><span>참고도면2.grm</span></GreenItem>
      <GreenItem $picked><Chips /><span>참고도면3.grm</span></GreenItem>
      <MenuFooter><GhostButton>+ New</GhostButton><GhostButton>Open</GhostButton></MenuFooter>
    </GreenMenu>
    <GreenSpacer />
    <LayoutTabs>
      <LayoutTab $w={11} $pad={3} $size={8} $gap={1} $bg="#b5ab93">+</LayoutTab>
      <LayoutTab $w={43} $pad={4} $bg="#b8ad95">Layout 02</LayoutTab>
      <LayoutTab $w={45} $pad={4} $bg="linear-gradient(#ff8a3a, #d8520a)" $clip="polygon(0 0, 84% 0, 100% 100%, 0 100%)">Layout 01</LayoutTab>
      <LayoutTab $w={32} $pad={11} $bg="#76684a" $clip="polygon(22% 0, 100% 0, 100% 100%, 0 100%)">Model</LayoutTab>
    </LayoutTabs>
    <CommandBar>
      <CommandGroup>
        <CommandRow>
          {['CIRCLE', 'ELLIPSE', 'RECTA...', 'POLYGON'].map(c => <Command key={c}>{c}<Pentagon /></Command>)}
          <Command>POINT<svg width="9" height="9" viewBox="0 0 9 9"><circle cx="4.5" cy="4.5" r="3.3" fill="#f4efdc" /></svg></Command>
          <Command>HATCH<svg width="9" height="9" viewBox="0 0 9 9" fill="none" stroke="#e6dfc8" strokeWidth=".8"><path d="M2 2h5v5H2zM2 2l5 5M7 2 2 7M3.5 1.5v6M5.5 1.5v6" /></svg></Command>
          <Command>WIPEOUT<svg width="9" height="9" viewBox="0 0 9 9" fill="none" stroke="#e6dfc8" strokeWidth=".8"><path d="M1 1.5h6.500V5L5 7.500H1zM8 5v3H5" strokeDasharray="2 .5" /></svg></Command>
          <AddCommand>+</AddCommand>
        </CommandRow>
        <Categories>
          {[['수/연산', 29], ['블록', 28], ['레이어', 26], ['뷰', 21], ['선택/조회', 36], ['모델링', 37], ['선형/횡단', 34], ['구조/배근', 48], ['+', 21]].map(([t, w]) => (
            <Category key={t} $w={w}>{t}</Category>
          ))}
        </Categories>
      </CommandGroup>
      <Prompt><b>명령어</b><span>전체보기</span></Prompt>
    </CommandBar>
  </Window>
);

const PropertiesPanel = () => (
  <Props>
    <PropsHead>선택된 객체 - 폴리선</PropsHead>
    <Card>
      <Field $dim $c="#a8a39a">레이어<b>000-작업선</b></Field>
      <Field $dim $c="#ef9a98">색상<b>Red</b><Note>(ByL)<ColorBar /></Note></Field>
      <Field $dim $c="#a8a39a">선꼴<b>Continuous</b><Note>(ByL)<LineBar /></Note></Field>
      <Field>선 가중치<b>0.25</b><Note $r={24}>(ByO, ByL)</Note></Field>
      <Field>선 축척<b>1.0000</b><Note $r={1}>(LTscale:1)</Note></Field>
      <Field $c="#e00000">투명도<b>0</b>
        <Note $gap={8}>(ByL)
          <svg width="46" height="16" viewBox="0 0 46 16">
            <path d="M3 4h35" stroke="#c9bfa9" strokeWidth="3" strokeLinecap="round" />
            <circle cx="3.2" cy="4" r="3" fill="#e01010" /><circle cx="2.5" cy="3" r="1" fill="#ff9a9a" />
            <text x="4" y="14.5" fontSize="5.8">0</text>
            <text x="31" y="14.5" fontSize="5.8">90 %</text>
          </svg>
        </Note>
      </Field>
    </Card>
    <SectionHead $h={17} $top={7} $bold>형상<u>상세보기</u></SectionHead>
    <Figure>
      <svg width="158" height="74" viewBox="1074 350 158 74" fill="none">
        <path d="M1093 362h100a25.5 25.5 0 0 1 0 51.5h-42M1093 359.5v5M1095 362l2-1.5v3zM1150 411v5M1152 413.5l2-1.5v3z" stroke="#c4c0ba" />
        <path d="M1093 369.5h99a18 18 0 0 1 0 36h-43" stroke="#30483f" strokeWidth="1.3" />
        <g fill="#222" fontSize="6.6">
          <text x="1131.5" y="357.5">길이 = 28.1297</text>
          <text x="1131.5" y="390.5">면적 = 23.4400</text>
        </g>
      </svg>
    </Figure>
    <SectionHead $h={11}>세그먼트 폭</SectionHead>
    <DataTable heads={['정점', '시작 폭', '끝 폭', '전역 폭']} rows={Array(5).fill(['0.0000', '0.0000'])} total="0.0000" bar={40} />
    <Checks><Check /><span>선 패턴 연속 적용</span><Check /><span>닫힘</span></Checks>
    <SectionHead $h={22} $top={2} $bold>위치</SectionHead>
    <DataTable heads={['구분', 'X', 'Y', '고도']} rows={positions} total="0.0000" bar={22} />
    <PropsFoot>선택된 객체 - 전체 1</PropsFoot>
  </Props>
);

const ReadOnlyWindow = () => (
  <Window $x={234} $y={178} $w={1000} $h={585} $bg="#000" $shadow="0 4px 8px #0003">
    <TopLine $x={4} $w={704} />
    <TopLine $x={868} $w={112} />
    <OrangeBar>
      <Brand>Read Only</Brand>
      <Current>• 참고도면3</Current>
      <svg width="8" height="5" viewBox="0 0 8 5" fill="none" stroke="#ffe0cf"><path d="M1 .5l3 3 3-3" /></svg>
      <Gap />
      <LayerBox>
        <Bulb s={11} /><Freeze s={9} c="#c0aaa0" /><Lock s={10} />
        <TwoLine $w={60} $pad={3}><small>레이어</small>000-작업선</TwoLine>
      </LayerBox>
      <TwoLine $w={43} $pad={8} $gap={3} $indent={2} $line><small>상세보기</small><span>속성창</span></TwoLine>
      <Gap $w={92} />
      <svg width="34" height="12" viewBox="0 0 34 12" fill="none" stroke="#fff"><path d="M1 3.5h6M27.5 .5l6 6M33.5 .5l-6 6" /></svg>
      <Gap $w={5} />
    </OrangeBar>
    <Body>
      <Sidebar>
        {groups.map(g => (
          <Group key={g.h + (g.title || '')} $h={g.h} $gap={g.gap} $top={g.top}>
            {g.title && <GroupTitle $h={g.th}>{g.title}</GroupTitle>}
            {g.tools.map(([icon, label, tone]) => (
              <Tool key={icon} $tone={tone}><IconBox $on={tone === 'on'}><ToolIcon name={icon} /></IconBox>{label}</Tool>
            ))}
          </Group>
        ))}
      </Sidebar>
      <Canvas><Drawing /></Canvas>
      <BrownMenu>
        <BrownItem><span>•</span>참고도면1.grm</BrownItem>
        <BrownItem><span>•</span>참고도면2.grm</BrownItem>
        <BrownItem $picked><span>•</span>참고도면3.grm</BrownItem>
      </BrownMenu>
      <LayerPanel>
        {layers.map(([name, c]) => (
          <LayerRow key={name} $active={name === '0'}>
            <Bulb s={10} /><Freeze /><Lock s={10} /><Swatch $c={c} />
            <LayerName $wide={!name.startsWith('CE')}>{name}</LayerName>
          </LayerRow>
        ))}
      </LayerPanel>
      <PropertiesPanel />
      <BottomTabs>
        <BottomTab $w={60} $pad={17}>Layout 02</BottomTab>
        <BottomTab $w={58} $pad={15}>Layout 01</BottomTab>
        <BottomTab $w={53} $pad={15} $on>Model</BottomTab>
      </BottomTabs>
    </Body>
  </Window>
);

export default function App() {
  return (
    <>
      <Global />
      <Desktop>
        <GreenWindow />
        <ReadOnlyWindow />
        <Callout>
          <CalloutTag>Properties 상세보기
            <svg width="13" height="13" viewBox="0 0 13 13"><circle cx="6.5" cy="6.5" r="6" fill="#111" /><path d="M3 6.5h6M6.8 4 9.3 6.5 6.8 9" fill="none" stroke="#ffc400" strokeWidth="1.5" /></svg>
          </CalloutTag>
          <CalloutText>선택된 객체의 모든 속성정보 확인</CalloutText>
        </Callout>
      </Desktop>
    </>
  );
}
